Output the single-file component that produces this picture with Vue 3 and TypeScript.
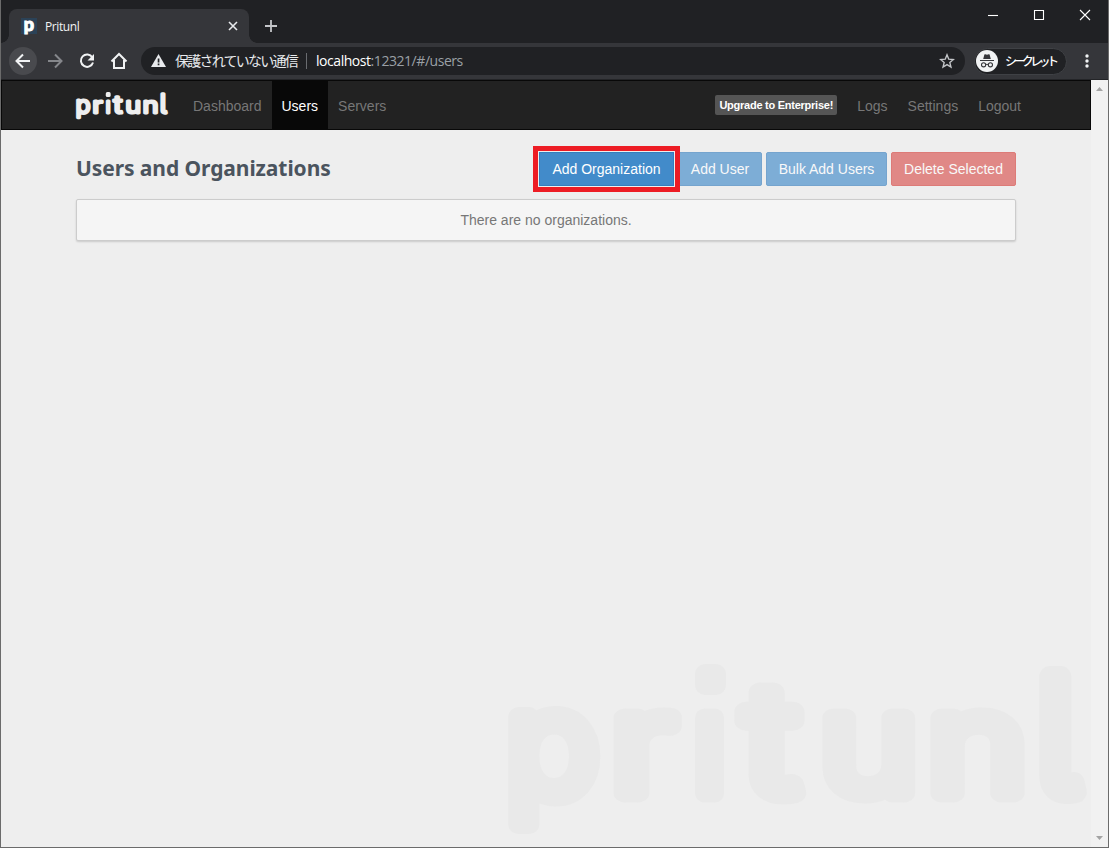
<script setup lang="ts">
interface Glyph { c: string; x: number; y: number; sx: number; sy: number }

// Rounded wordmark: each letter is placed and scaled on its own
const wordmark: Glyph[] = [
  { c: 'p', x: 506, y: 795, sx: 1.11, sy: 1.04 },
  { c: 'r', x: 611, y: 793, sx: 1.27, sy: 1 },
  { c: 'ı', x: 693, y: 793, sx: 1.03, sy: 1 },
  { c: 't', x: 745, y: 793, sx: 1.28, sy: 1.08 },
  { c: 'u', x: 820, y: 793, sx: 1.2, sy: 1 },
  { c: 'n', x: 928, y: 793, sx: 1.22, sy: 1 },
  { c: 'l', x: 1037, y: 793, sx: 1.14, sy: 1.16 },
]
const leftLinks = [
  { label: 'Dashboard', active: false },
  { label: 'Users', active: true },
  { label: 'Servers', active: false },
]
const rightLinks = ['Logs', 'Settings', 'Logout']
const actions = [
  { label: 'Add Organization', kind: 'primary', disabled: false, width: 135 },
  { label: 'Add User', kind: 'primary', disabled: true, width: 84 },
  { label: 'Bulk Add Users', kind: 'primary', disabled: true, width: 121 },
  { label: 'Delete Selected', kind: 'danger', disabled: true, width: 125 },
]
</script>

<template>
  <div class="window">
    <header class="tabstrip">
      <div class="tab">
        <span class="favicon">p</span>
        <span class="tab-title">Pritunl</span>
        <svg class="tab-close" width="10" height="10" viewBox="0 0 10 10"><path d="M1 1l8 8M9 1l-8 8" /></svg>
      </div>
      <svg class="new-tab" width="14" height="14" viewBox="0 0 14 14"><path d="M7 1v12M1 7h12" /></svg>
      <div class="controls">
        <svg width="46" height="30" viewBox="0 0 46 30"><path d="M18 15.5h10" /></svg>
        <svg width="46" height="30" viewBox="0 0 46 30"><path d="M18.5 10.500h9v9h-9z" /></svg>
        <svg width="46" height="30" viewBox="0 0 46 30"><path d="M18 10l10 10M28 10l-10 10" /></svg>
      </div>
    </header>

    <div class="toolbar">
      <span class="round">
        <svg width="16" height="16" viewBox="0 0 16 16"><path d="M15 8H2M8 1.500L1.500 8L8 14.500" /></svg>
      </span>
      <svg class="tool forward" width="16" height="16" viewBox="0 0 16 16"><path d="M1 8h13M8 1.500L14.500 8L8 14.500" /></svg>
      <svg class="tool" width="16" height="16" viewBox="0 0 16 16">
        <path d="M13.300 4.300A6.200 6.200 0 1 0 14 9.500" /><path class="solid" d="M15 1v6.500H8.500z" />
      </svg>
      <svg class="tool home" width="18" height="18" viewBox="0 0 18 18"><path d="M1.500 9.500L9 2l7.500 7.500M4 8v8h10V8" /></svg>
      <div class="omnibox">
        <svg class="warn" width="15" height="13" viewBox="0 0 15 13"><path d="M7.500 0L15 13H0z" /><path class="hole" d="M6.700 4.500h1.700v4H6.700zM6.700 9.500h1.700v1.700H6.700z" /></svg>
        <span class="insecure">保護されていない通信</span>
        <span class="divider"></span>
        <span class="url"><b>localhost</b>:12321/#/users</span>
        <svg class="star" width="16" height="16" viewBox="0 0 16 16"><path d="M8 1.800l1.750 4.350 4.700.35-3.600 3.050 1.100 4.550L8 11.650 4.050 14.100l1.100-4.550L1.550 6.500l4.700-.35z" /></svg>
      </div>
      <div class="incognito">
        <svg width="22" height="22" viewBox="0 0 22 22">
          <circle class="disc" cx="11" cy="11" r="11" />
          <path class="hat" d="M7.200 9L8.400 4.600Q8.600 4 9.300 4.200L11 4.700 12.700 4.200Q13.400 4 13.600 4.600L14.800 9zM4 10h14v1.100H4z" />
          <g class="glasses"><circle cx="7.600" cy="14.800" r="2.100" /><circle cx="14.400" cy="14.800" r="2.100" /><path d="M9.700 14.600q1.300-.8 2.600 0" /></g>
        </svg>
        <span>シークレット</span>
      </div>
      <svg class="dots" width="4" height="14" viewBox="0 0 4 14"><circle cx="2" cy="2" r="1.700" /><circle cx="2" cy="7" r="1.700" /><circle cx="2" cy="12" r="1.700" /></svg>
    </div>

    <div class="viewport">
      <div class="page">
        <nav class="navbar">
          <svg class="brand" width="92" height="29" viewBox="507 664 581 182" role="img" aria-label="pritunl">
            <g v-for="g in wordmark" :key="g.c" :transform="`translate(${g.x} ${g.y}) scale(${g.sx} ${g.sy})`"><text>{{ g.c }}</text></g>
            <rect x="695" y="664" width="31" height="31" rx="10" />
          </svg>
          <a v-for="l in leftLinks" :key="l.label" class="link" :class="{ active: l.active }">{{ l.label }}</a>
          <span class="upgrade">Upgrade to Enterprise!</span>
          <a v-for="l in rightLinks" :key="l" class="link">{{ l }}</a>
        </nav>
        <main class="content">
          <div class="heading">
            <h1>Users and Organizations</h1>
            <div class="actions">
              <button
                v-for="a in actions" :key="a.label" :class="[a.kind, { faded: a.disabled, marked: !a.disabled }]"
                :style="{ width: a.width + 'px' }"
              >{{ a.label }}</button>
            </div>
          </div>
          <div class="empty">There are no organizations.</div>
        </main>
        <svg class="watermark" width="590" height="190" viewBox="500 658 590 190" role="img" aria-label="pritunl">
          <g v-for="g in wordmark" :key="g.c" :transform="`translate(${g.x} ${g.y}) scale(${g.sx} ${g.sy})`"><text>{{ g.c }}</text></g>
          <rect x="695" y="664" width="31" height="31" rx="10" />
        </svg>
      </div>
      <div class="scrollbar">
        <svg width="7" height="4" viewBox="0 0 7 4"><path d="M0 4L3.500 0L7 4z" /></svg>
        <svg width="7" height="4" viewBox="0 0 7 4"><path d="M0 0h7L3.500 4z" /></svg>
      </div>
    </div>
  </div>
</template>

<style>
body { margin: 0; background: #6b6b6b; }
</style>

<style scoped>
* { box-sizing: border-box; }
svg { display: block; flex: none; }
.window {
  width: 1109px; height: 848px; display: flex; flex-direction: column;
  border: solid #6b6b6b; border-width: 0 1px 1px;
  font-family: "Liberation Sans", "Noto Sans CJK JP", sans-serif;
}
.tabstrip { height: 43px; background: #202124; display: flex; align-items: flex-start; }
.tab {
  width: 240px; height: 34px; margin: 9px 0 0 8px; padding: 0 11px 0 12px; display: flex; align-items: center;
  background: #35363a; border-radius: 8px 8px 0 0; position: relative;
}
.tab::before, .tab::after { content: ""; position: absolute; bottom: 0; width: 8px; height: 8px; }
.tab::before { left: -8px; background: radial-gradient(circle at 0 0, transparent 7.5px, #35363a 8px); }
.tab::after { right: -8px; background: radial-gradient(circle at 100% 0, transparent 7.5px, #35363a 8px); }
.favicon { width: 16px; height: 16px; background: #2b4257; color: #fff; font: 900 18px/12px Lato, sans-serif; text-align: center; -webkit-text-stroke: 1px #fff; }
.tab-title { margin-left: 8px; font: 12px "Open Sans", sans-serif; letter-spacing: -0.4px; color: #f1f3f4; flex: 1; }
.tab-close { stroke: #e8eaed; stroke-width: 1.6; }
.new-tab { margin: 19px 0 0 15px; stroke: #c4c6c9; stroke-width: 1.8; }
.controls { margin-left: auto; display: flex; }
.controls svg { fill: none; stroke: #fff; stroke-width: 1.1; }
.toolbar { height: 37px; background: #35363a; border-bottom: 1px solid #242528; display: flex; align-items: center; padding-left: 8px; }
.round { width: 28px; height: 28px; border-radius: 50%; background: #494a4e; display: flex; align-items: center; justify-content: center; }
.toolbar .round svg, .tool { fill: none; stroke: #f1f3f4; stroke-width: 2; }
.tool { margin-left: 16px; }
.toolbar .forward { margin-left: 10px; stroke: #85878b; }
.home { margin-left: 15px; }
.toolbar .solid { fill: #f1f3f4; stroke: none; }
.omnibox { width: 824px; height: 28px; margin-left: 13px; padding: 0 10px 0 10px; border-radius: 14px; background: #202124; display: flex; align-items: center; }
.warn { fill: #e8eaed; margin-top: -1px; }
.hole { fill: #202124; }
.insecure { width: 123px; margin: -2px 0 0 9px; font: 14px/20px "Noto Sans CJK JP", sans-serif; letter-spacing: -1.75px; color: #e8eaed; white-space: nowrap; }
.divider { width: 1px; height: 16px; margin: 0 9px 0 8px; background: #6a6c70; }
.url { font: 14px/20px "Open Sans", sans-serif; letter-spacing: -0.45px; color: #9aa0a6; }
.url b { font-weight: 400; color: #fff; }
.star { margin-left: auto; fill: none; stroke: #c4c6c9; stroke-width: 1.4; }
.incognito { width: 93px; height: 27px; margin-left: 9px; padding-left: 1px; border: 1px solid #3f4145; border-radius: 14px; background: #202124; display: flex; align-items: center; }
.incognito span { margin: -1px 0 0 7px; font: 500 12px "Noto Sans CJK JP", sans-serif; letter-spacing: -3.6px; color: #fff; white-space: nowrap; }
.disc { fill: #f1f3f4; }
.hat { fill: #35363a; }
.glasses { fill: none; stroke: #35363a; stroke-width: 1.1; }
.dots { margin-left: 18px; fill: #f1f3f4; }
.viewport { flex: 1; display: flex; min-height: 0; }
.page { width: 1090px; background: #eee; position: relative; }
.navbar { height: 50px; border: 1px solid #080808; background: #222; display: flex; align-items: center; padding: 0 59px 0 74px; }
.brand { margin: 2px 15px 0 0; overflow: visible; fill: #eee; stroke: #eee; }
.link { height: 48px; padding: 0 10px; font-size: 14px; line-height: 50px; color: #777; }
.link.active { background: #080808; color: #fff; }
.upgrade { margin: -1px 10px 0 auto; width: 122px; height: 20px; border-radius: 2px; background: #555; color: #fff; font-weight: 700; font-size: 11px; line-height: 20px; text-align: center; letter-spacing: -0.25px; white-space: nowrap; }
.content { width: 940px; margin: 22px 0 0 75px; }
.heading { height: 34px; display: flex; justify-content: space-between; align-items: center; }
h1 { margin: -3px 0 0; font: 700 21px "Noto Sans", sans-serif; letter-spacing: -0.08px; color: #4b545e; white-space: nowrap; }
.actions { display: flex; gap: 4px; }
button { height: 34px; padding: 0; border: 1px solid #357ebd; border-radius: 2px; background: #428bca; color: #fff; font: 14px "Liberation Sans", sans-serif; white-space: nowrap; }
button.danger { border-color: #d43f3a; background: #d9534f; }
.faded { opacity: .65; }
.marked { outline: 5px solid #ed1c24; outline-offset: 1px; border-radius: 0; position: relative; z-index: 1; }
.empty { height: 42px; margin-top: 13px; border: 1px solid #ccc; border-radius: 2px; background: #f5f5f5; box-shadow: 0 1px 2px rgba(0,0,0,.15); color: #777; font-size: 14px; line-height: 40px; text-align: center; }
.watermark { position: absolute; right: 1px; bottom: -1px; overflow: visible; fill: #e9e9e9; stroke: #e9e9e9; }
.brand text, .watermark text { font: 300 138px Inter, sans-serif; font-feature-settings: "cv05"; stroke-width: 19px; stroke-linejoin: round; }
.brand rect, .watermark rect { stroke: none; }
.scrollbar { width: 17px; padding: 7px 0 7px 5px; background: #f1f1f1; fill: #a3a3a3; display: flex; flex-direction: column; justify-content: space-between; }
</style>
